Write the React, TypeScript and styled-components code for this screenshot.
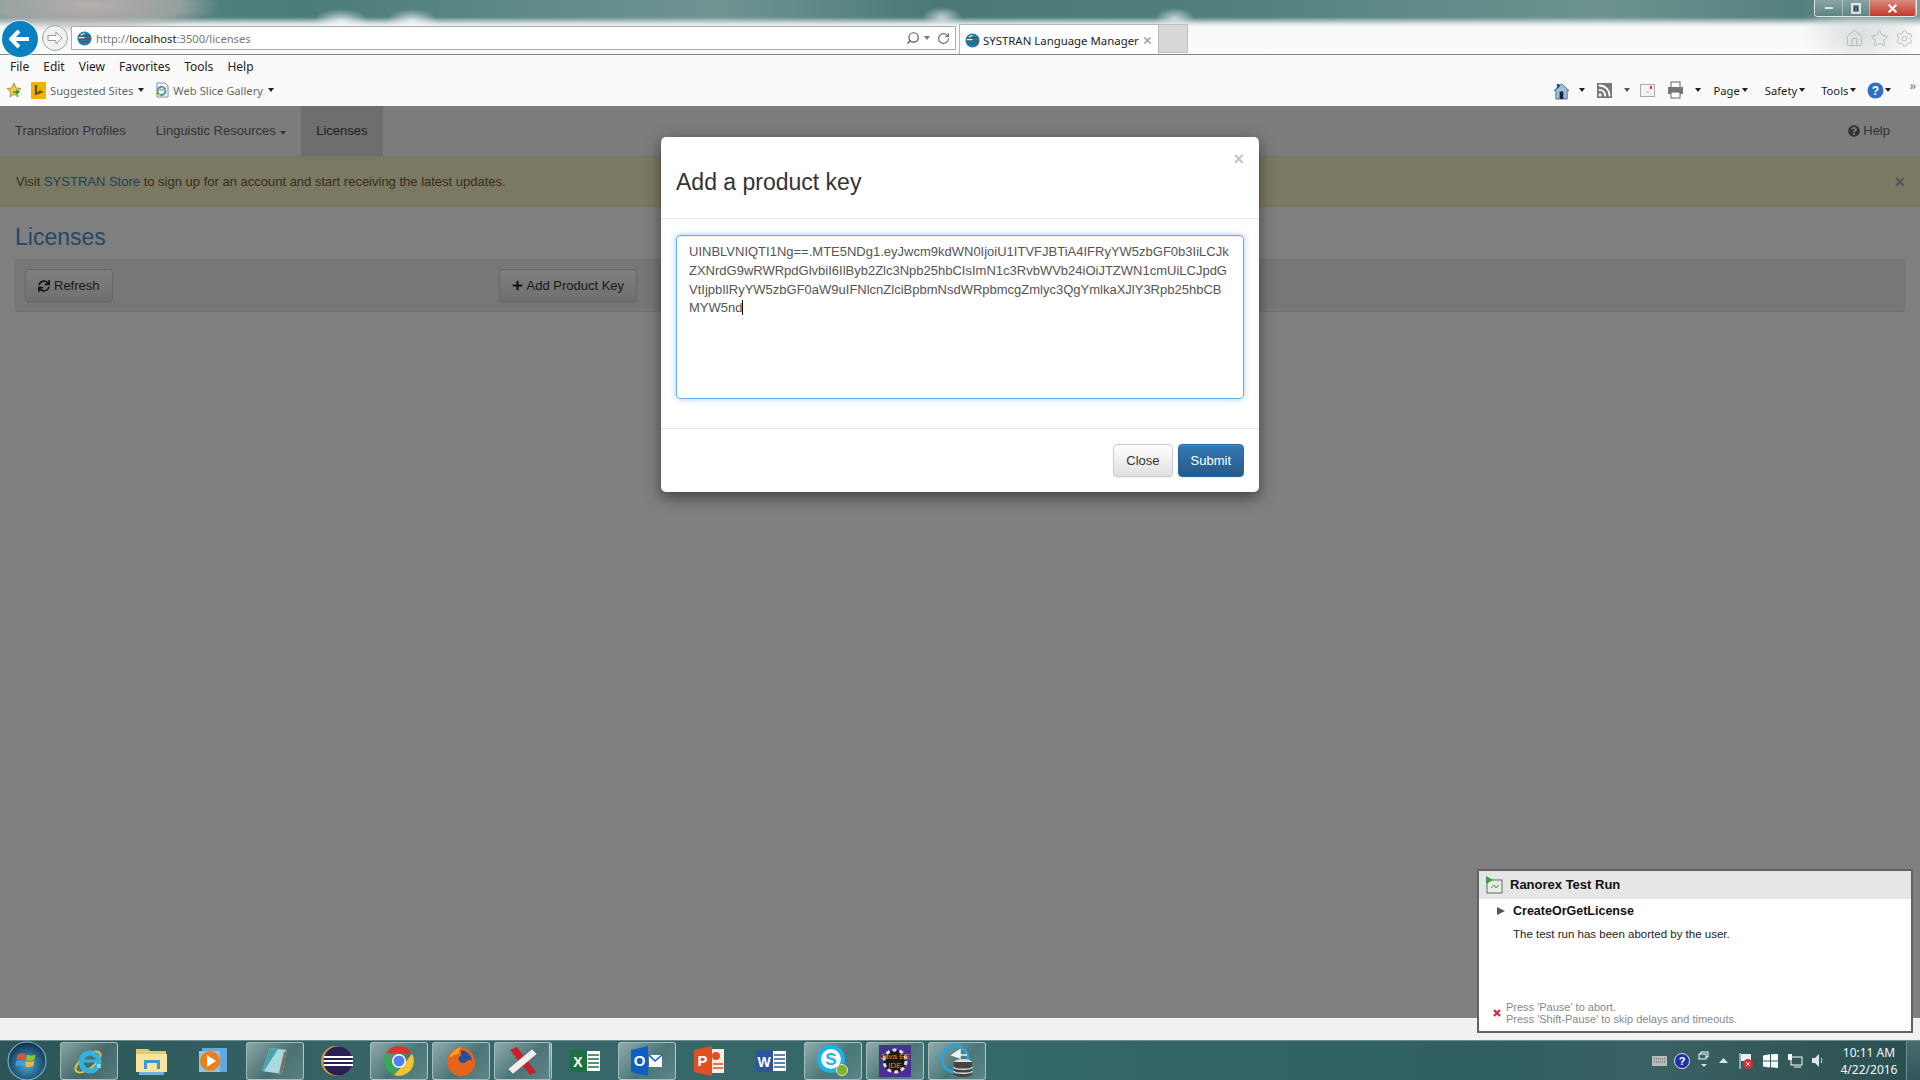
import React from "react";
import styled, { createGlobalStyle } from "styled-components";
import { FaSync, FaPlus, FaQuestionCircle } from "react-icons/fa";
import { Search, RotateCw, Home, Star, Settings, Minus, X, Rss } from "lucide-react";

const Global = createGlobalStyle`
  html, body { margin: 0; padding: 0; background: #808080; overflow: hidden; }
  * { box-sizing: border-box; }
`;
const UI = `"Noto Sans", "Liberation Sans", sans-serif`;
const WEB = `"Liberation Sans", Arial, sans-serif`;

const Screen = styled.div`
  width: 1920px; height: 1080px; display: flex; flex-direction: column; position: relative; overflow: hidden;
`;
const TopChrome = styled.header`
  height: 55px; flex: none; display: flex; flex-direction: column; border-bottom: 1px solid #7f8585;
  background:
    radial-gradient(ellipse 28px 12px at 341px 21px, rgba(255,255,255,.75), transparent),
    radial-gradient(ellipse 26px 12px at 412px 21px, rgba(255,255,255,.75), transparent),
    radial-gradient(ellipse 20px 10px at 942px 17px, rgba(255,255,255,.65), transparent),
    radial-gradient(ellipse 20px 10px at 1175px 18px, rgba(255,255,255,.65), transparent),
    radial-gradient(ellipse 130px 28px at 90px 6px, rgba(190,175,175,.95), rgba(190,180,180,.6) 70%, transparent),
    radial-gradient(ellipse 60px 36px at 1860px 34px, rgba(205,210,210,.7), transparent),
    linear-gradient(180deg, transparent 0, transparent 17px, #dfe6e6 24px, #f8f9f9 27px, #fbfbfb 100%),
    linear-gradient(90deg, #5d8b88 0, #4b7c7a 300px, #6f9593 720px, #497876 940px, #507f7d 1200px, #6c9390 1600px, #54807e 1800px, #7d9b9a 1920px);
`;
const TitleStrip = styled.div`
  height: 24px; display: flex; justify-content: flex-end; padding-right: 3px; flex: none;
`;
const WinControls = styled.div`
  display: flex; height: 17px; border: 1px solid #dfe6e6; border-top: 0; border-radius: 0 0 4px 4px; overflow: hidden;
`;
const WinBtn = styled.div<{ $w: number; $bg: string }>`
  width: ${p => p.$w}px; display: flex; align-items: center; justify-content: center; background: ${p => p.$bg};
  border-right: 1px solid rgba(255,255,255,.4); color: #fff;
`;
const AddressRow = styled.div`
  height: 30px; display: flex; align-items: flex-start; position: relative;
`;
const BackBtn = styled.div`
  width: 36px; height: 36px; border-radius: 50%; background: #0b80c0; margin: -3px 0 0 2px; display: flex; align-items: center; justify-content: center; position: relative; z-index: 1; flex: none;
  box-shadow: 0 0 0 1px rgba(255,255,255,.6);
`;
const FwdBtn = styled.div`
  width: 26px; height: 26px; border-radius: 50%; margin: 1px 3px 0 4px; display: flex; align-items: center; justify-content: center; flex: none;
  border: 1px solid #9fa5a5; background: #f0f1f1;
`;
const AddressBar = styled.div`
  width: 885px; height: 24px; margin-top: 2px; background: #fff; border: 1px solid #a8adad; display: flex; align-items: center; padding: 0 5px 0 5px; flex: none;
`;
const Url = styled.span`
  font: 11.2px ${UI}; color: #777; margin-left: 4px; flex: 1; white-space: nowrap;
  b { color: #222; font-weight: 400; }
`;
const Tab = styled.div`
  width: 200px; height: 30px; margin-left: 3px; background: #fff; border: 1px solid #b4b8b8; border-bottom: 0; display: flex; align-items: center; padding: 1px 0 0 5px; flex: none;
  font: 11.4px ${UI}; color: #222; white-space: nowrap; gap: 3px;
`;
const NewTab = styled.div`
  width: 29px; height: 29px; background: #d8d8d8; border: 1px solid #c0c0c0; border-left: 0; flex: none;
`;
const RightTools = styled.div`
  margin-left: auto; display: flex; gap: 6px; padding: 5px 6px 0 0; color: #a9aeae;
`;
const MenuArea = styled.div`
  height: 51px; flex: none; background: #fafafa; display: flex; flex-direction: column;
`;
const MenuRow = styled.nav`
  height: 22px; display: flex; align-items: center; padding-left: 10px; font: 12px ${UI}; color: #222; gap: 14px; flex: none;
`;
const FavRow = styled.div`
  height: 26px; display: flex; align-items: center; justify-content: space-between; font: 12px ${UI}; color: #555; padding: 0 4px 0 6px; flex: none;
`;
const FavGroup = styled.div`
  display: flex; align-items: center;
`;
const FavText = styled.span<{ $dark?: boolean; $ml?: number }>`
  margin-left: ${p => p.$ml ?? 4}px; color: ${p => (p.$dark ? "#222" : "#666")}; white-space: nowrap; font-size: 11.2px;
`;
const Caret = styled.i<{ $ml?: number; $c?: string }>`
  display: inline-block; width: 0; height: 0; border: 3.5px solid transparent; border-top: 4px solid ${p => p.$c ?? "#222"}; border-bottom: 0; margin-left: ${p => p.$ml ?? 5}px;
`;
const SideArrow = styled.i`
  display: inline-block; width: 0; height: 0; border-top: 4px solid transparent; border-bottom: 4px solid transparent; border-left: 8px solid #555;
`;
const IconSlot = styled.span<{ $ml?: number }>`
  display: inline-flex; margin-left: ${p => p.$ml ?? 0}px;
`;
const Chevrons = styled.span`
  font: 13px ${UI}; color: #778; margin: -10px 0 0 18px;
`;
const Page = styled.main`
  flex: 1; position: relative; background: #fff; font: 13px/18px ${WEB}; color: #333; display: flex; flex-direction: column;
`;
const Backdrop = styled.div`
  position: absolute; inset: 0; background: rgba(0,0,0,.5);
`;
const Navbar = styled.nav`
  height: 51px; background: #f8f8f8; display: flex; flex: none; border-bottom: 1px solid #e7e7e7;
`;
const NavLink = styled.a<{ $active?: boolean }>`
  padding: 0 15px; line-height: 50px; color: #666; background: ${p => (p.$active ? "#dcdcdc" : "transparent")};
  ${p => p.$active && "color:#444; padding: 0 15.500px;"}
`;
const NavHelp = styled.a`
  margin-left: auto; padding: 0 30px 0 0; line-height: 50px; color: #666; display: flex; align-items: center; gap: 3px;
`;
const Alert = styled.div`
  height: 50px; background: #f8f3c4; border-bottom: 1px solid #f3ebb6; padding: 0 15px 0 16px; line-height: 49px; color: #6a5c30; flex: none; display: flex; justify-content: space-between; align-items: center;
  a { color: #3a7fb8; }
`;
const AlertClose = styled.span`
  font: bold 18px/18px ${WEB}; color: #aaa; margin-right: 0;
`;
const PageTitle = styled.h1`
  font: 23px/30px ${WEB}; color: #4a8fd0; margin: 15px 15px 7px;
`;
const Toolbar = styled.div`
  margin: 0 15px; height: 53px; padding: 9px; background: #eee; border: 1px solid #e3e3e3; border-radius: 3px; display: flex; align-items: flex-start;
`;
const Btn = styled.button<{ $primary?: boolean; $ml?: number }>`
  height: 33px; padding: 0 12px; font: 13px ${WEB}; display: inline-flex; align-items: center; gap: 4px; justify-content: center;
  margin-left: ${p => p.$ml ?? 0}px;
  color: ${p => (p.$primary ? "#fff" : "#333")};
  border: 1px solid ${p => (p.$primary ? "#2b669a" : "#ccc")}; border-radius: 4px;
  background: ${p => (p.$primary ? "linear-gradient(#337ab7,#265a88)" : "linear-gradient(#fff,#e0e0e0)")};
  box-shadow: inset 0 1px 0 rgba(255,255,255,.15), 0 1px 1px rgba(0,0,0,.075);
`;
const Modal = styled.div`
  position: absolute; left: 661px; top: 31px; width: 598px; height: 355px; background: #fff; border-radius: 5px;
  box-shadow: 0 5px 15px rgba(0,0,0,.5); display: flex; flex-direction: column;
`;
const ModalHead = styled.div`
  height: 82px; padding: 0 15px; border-bottom: 1px solid #e5e5e5; position: relative; flex: none;
`;
const ModalTitle = styled.h4`
  margin: 32px 0 0; font: 500 23px/26px ${WEB}; color: #333;
`;
const ModalClose = styled.span`
  position: absolute; right: 15px; top: 13px; font: bold 18px/18px ${WEB}; color: #c4c4c4;
`;
const ModalBody = styled.div`
  height: 210px; padding: 16px 15px 0; border-bottom: 1px solid #e5e5e5; flex: none;
`;
const KeyArea = styled.div`
  height: 164px; border: 1px solid #66afe9; border-radius: 4px; padding: 7px 12px; font: 13px/18.8px ${WEB}; color: #555;
  box-shadow: inset 0 1px 1px rgba(0,0,0,.075), 0 0 6px rgba(102,175,233,.6); white-space: nowrap;
`;
const KeyLine = styled.div``;
const TextCaret = styled.span`
  display: inline-block; width: 1px; height: 15px; background: #111; vertical-align: -3px;
`;
const ModalFoot = styled.div`
  flex: 1; display: flex; justify-content: flex-end; gap: 5px; padding: 15px 15px 0;
`;
const Ranorex = styled.aside`
  position: absolute; left: 1477px; top: 869px; width: 436px; height: 164px; background: #fff; border: 2px solid #5f6366; display: flex; flex-direction: column;
  font: 11px ${WEB}; color: #222;
`;
const RanHead = styled.div`
  height: 28px; background: #e6e6e6; display: flex; align-items: center; padding: 0 0 1px 6px; gap: 7px; font: bold 13px ${WEB}; color: #111; flex: none;
`;
const RanTitle = styled.div`
  display: flex; align-items: center; padding: 5px 0 0 18px; gap: 8px; font: bold 12.5px ${WEB}; color: #111;
`;
const RanMsg = styled.div`
  padding: 10px 0 0 34px; font: 11.5px ${WEB}; color: #222;
`;
const RanFoot = styled.div`
  margin-top: auto; padding: 0 0 6px 14px; display: flex; align-items: center; gap: 5px; color: #888; font: 11px/12px ${WEB};
`;
const StatusBar = styled.div`
  height: 22px; flex: none; background: #f3f0f1; border-top: 1px solid #f9f9f9;
`;
const Taskbar = styled.footer`
  height: 40px; flex: none; display: flex; align-items: center; position: relative;
  background: linear-gradient(90deg, #2c5557 0, #376668 400px, #35686a 1000px, #2f5f61 1500px, #3a6163 1650px, #2a4f51 1920px);
  border-top: 1px solid #6f8d8e;
`;
const Orb = styled.div`
  width: 60px; height: 39px; display: flex; align-items: center; justify-content: center; flex: none; padding-right: 6px;
`;
const TaskBtn = styled.div<{ $framed?: boolean; $stack?: boolean; $ml?: number }>`
  width: 58px; height: 38px; margin-right: 4px; margin-left: ${p => p.$ml ?? 0}px; flex: none; border-radius: 3px; display: flex; align-items: center; justify-content: center; position: relative;
  ${p => p.$framed && `
    border: 1px solid rgba(215,228,228,.6);
    background: linear-gradient(135deg, rgba(255,255,255,.45), rgba(255,255,255,.1) 55%, rgba(255,255,255,.2));
  `}
  ${p => p.$stack && `border-right: 3px double rgba(215,228,228,.6);`}
`;
const Tray = styled.div`
  margin-left: auto; display: flex; align-items: center; height: 100%; color: #fff;
`;
const TrayIcon = styled.span<{ $w: number }>`
  width: ${p => p.$w}px; display: flex; align-items: center; justify-content: center; flex: none;
`;
const Clock = styled.div`
  width: 68px; text-align: center; font: 12px/17px ${UI}; color: #f4f8f8; margin-left: 6px; flex: none;
`;
const ShowDesktop = styled.div`
  width: 14px; height: 100%; margin-left: 3px; border-left: 1px solid #789; background: linear-gradient(#4a6e70,#2f5557); flex: none;
`;

const Globe = ({ s = 15 }: { s?: number }) => (
  <svg width={s} height={s} viewBox="0 0 16 16"><circle cx="8" cy="8" r="7.500" fill="#1d7fb4" /><path d="M2 5h12M1 8.500h14M3 11.500h11" stroke="#555" strokeWidth="1.600" /><path d="M4 4.500 8 2.500M2 7h6" stroke="#dff" strokeWidth="1.200" /></svg>
);
const IEIcon = () => (
  <svg width="32" height="30" viewBox="0 0 32 30">
    <ellipse cx="15" cy="16" rx="15" ry="6.500" fill="none" stroke="#f1c232" strokeWidth="2" transform="rotate(-38 15 16)" />
    <circle cx="17" cy="16" r="9" fill="none" stroke="#35b0e4" strokeWidth="5" />
    <path d="M10 15h15" stroke="#35b0e4" strokeWidth="3" /><path d="M24 20l4 0" stroke="#86d2f0" strokeWidth="4" />
  </svg>
);
const Folder = () => (
  <svg width="33" height="30" viewBox="0 0 33 30"><path d="M1 3h12l2 2h16v21H1z" fill="#e8c76a" /><rect x="1" y="8" width="31" height="18" fill="#f6e4a0" /><path d="M9 14h16v9H9z" fill="#3a9bd0" /><path d="M12 17h10v6H12z" fill="#f6e4a0" /><rect x="4" y="26" width="25" height="3" fill="#6db4dd" /></svg>
);
const Media = () => (
  <svg width="28" height="26" viewBox="0 0 28 26"><rect x="3" y="0" width="25" height="24" fill="#62a9dc" /><rect x="0" y="3" width="21" height="21" fill="#8dc4ea" /><circle cx="11" cy="13" r="10" fill="#ee7d1c" /><path d="M8 7l9 6-9 6z" fill="#fff" /></svg>
);
const Note = () => (
  <svg width="34" height="30" viewBox="0 0 34 30"><path d="M12 2l17 2-5 24-20-3z" fill="#a8dbe0" /><path d="M12 2l8 1-14 22H4z" fill="#4f9fae" /><path d="M26 6l3-2-5 24-3-1z" fill="#7e6f55" /></svg>
);
const Eclipse = () => (
  <svg width="32" height="32" viewBox="0 0 32 32"><circle cx="15" cy="16" r="15" fill="#c79a35" /><circle cx="17" cy="16" r="14.500" fill="#2b1d58" /><path d="M3 12h29M2.500 16h29.500M3 20h29" stroke="#fff" strokeWidth="2" /></svg>
);
const Chrome = () => (
  <svg width="30" height="30" viewBox="-15 -15 30 30">
    <path d="M0-15A15 15 0 0 1 13-7.500L0-7z" fill="#d9352c" /><path d="M-13-7.500A15 15 0 0 1 0-15L13-7.500H0z" fill="#d9352c" />
    <path d="M-13-7.500A15 15 0 0 0-5 14L0 6z" fill="#3aa757" /><path d="M13-7.500A15 15 0 0 1-5 14L6 2z" fill="#f3c430" />
    <circle r="7" fill="#fff" /><circle r="5.500" fill="#4e82ee" />
  </svg>
);
const Firefox = () => (
  <svg width="30" height="32" viewBox="0 0 30 32"><circle cx="15" cy="17" r="14" fill="#e8641b" /><path d="M15 5a12 12 0 0 1 11 11c-4-4-5 2-9 2-5 0-6-6-2-7z" fill="#24509a" /><path d="M3 13c3-7 8-10 13-11-3 3-4 5-3 7-4 0-7 2-10 4z" fill="#f4a227" /></svg>
);
const Cross = () => (
  <svg width="32" height="28" viewBox="0 0 32 28"><path d="M4 3l7-3 19 25-6 3z" fill="#c8202a" /><path d="M2 22L26 2l5 5L7 27z" fill="#f1efee" stroke="#666" strokeWidth=".6" /></svg>
);
const Sheet = ({ c, l, line = "#fff" }: { c: string; l: string; line?: string }) => (
  <svg width="30" height="24" viewBox="0 0 30 24">
    <rect x="0" y="1" width="17" height="22" fill={c} />
    <text x="8" y="17.500" fontFamily="Liberation Sans" fontWeight="700" fontSize="14" textAnchor="middle" fill="#fff">{l}</text>
    <rect x="17" y="2" width="13" height="20" fill={line} />
    <path d="M18 6h11M18 10h11M18 14h11M18 18h11" stroke={c} strokeWidth="1.400" />
  </svg>
);
const Outlook = () => (
  <svg width="32" height="30" viewBox="0 0 32 30"><path d="M0 4l17-4v30L0 26z" fill="#0a5fc4" /><text x="8.500" y="20" fontFamily="Liberation Sans" fontWeight="700" fontSize="15" textAnchor="middle" fill="#fff">O</text><rect x="18" y="9" width="13" height="12" fill="#fff" /><path d="M18 9l6 6 7-6" fill="none" stroke="#0a5fc4" strokeWidth="1.500" /></svg>
);
const Ppt = () => (
  <svg width="30" height="30" viewBox="0 0 30 30"><rect x="16" y="3" width="14" height="24" fill="#fdebe4" /><path d="M0 4l18-4v30L0 26z" fill="#e14f23" /><text x="8.500" y="20" fontFamily="Liberation Sans" fontWeight="700" fontSize="15" textAnchor="middle" fill="#fff">P</text><circle cx="22" cy="10" r="4" fill="#e14f23" /><path d="M19 18h10M19 22h10" stroke="#e14f23" strokeWidth="1.500" /></svg>
);
const Skype = () => (
  <svg width="32" height="32" viewBox="0 0 32 32"><circle cx="14" cy="14" r="12" fill="none" stroke="#1ab3ec" strokeWidth="4" /><circle cx="14" cy="14" r="10" fill="#fff" /><text x="14" y="20" fontFamily="Liberation Sans" fontWeight="700" fontSize="17" textAnchor="middle" fill="#1ab3ec">S</text><circle cx="25" cy="25" r="5.500" fill="#7db32a" stroke="#dfe8c8" /></svg>
);
const JavaEE = () => (
  <svg width="32" height="32" viewBox="0 0 32 32"><rect width="32" height="32" fill="#4a2f8e" /><circle cx="16" cy="16" r="11" fill="#181818" stroke="#ddd" strokeWidth="3" strokeDasharray="4 3" /><text x="16" y="14" fontFamily="Liberation Sans" fontSize="8" textAnchor="middle" fill="#e98a2b">Java EE</text><text x="16" y="23" fontFamily="Liberation Sans" fontSize="8" textAnchor="middle" fill="#e98a2b">IDE</text></svg>
);
const IEDb = () => (
  <svg width="34" height="34" viewBox="0 0 34 34"><circle cx="15" cy="15" r="13" fill="none" stroke="#2aa2dd" strokeWidth="3" /><path d="M20 6l-8 5 8 3zM12 11h15" fill="#eaf4fa" stroke="#eaf4fa" strokeWidth="1.500" /><ellipse cx="23" cy="18" rx="9" ry="3" fill="#ddd" /><path d="M14 18v12c0 4 18 4 18 0V18" fill="#444" /><path d="M14 23c0 3 18 3 18 0M14 27c0 3 18 3 18 0" fill="none" stroke="#ddd" strokeWidth="1.500" /></svg>
);
const WinOrb = () => (
  <svg width="40" height="40" viewBox="0 0 38 38">
    <defs><radialGradient id="orb" cx=".5" cy=".6" r=".6"><stop offset="0" stopColor="#4aa8d8" /><stop offset="1" stopColor="#0d2f47" /></radialGradient></defs>
    <circle cx="19" cy="19" r="18" fill="url(#orb)" stroke="#7fb7d4" />
    <path d="M10 13c3-2 6-1 8 0l-1 5c-3-1-5-1-8 0z" fill="#e2533a" /><path d="M19 13c3 1 5 1 8 0l-1 5c-3 1-5 1-8 0z" fill="#8cc63f" />
    <path d="M9 19c3-1 5-1 8 0l-1 5c-3-1-5-1-8 0z" fill="#3e9fe0" /><path d="M18 19c3 1 5 1 8 0l-1 5c-3 1-6 1-8 0z" fill="#f7b52c" />
  </svg>
);
const RanorexIcon = () => (
  <svg width="18" height="18" viewBox="0 0 18 18"><rect x="2" y="4" width="15" height="13" fill="#e6eee2" stroke="#667" /><path d="M1 0l7 4-7 4z" fill="#3aa33a" /><path d="M6 12l3-3 2 3 3-3" stroke="#3a9a3a" fill="none" /></svg>
);

const KEY = [
  "UINBLVNIQTI1Ng==.MTE5NDg1.eyJwcm9kdWN0IjoiU1ITVFJBTiA4IFRyYW5zbGF0b3IiLCJk",
  "ZXNrdG9wRWRpdGlvbiI6IlByb2Zlc3Npb25hbCIsImN1c3RvbWVb24iOiJTZWN1cmUiLCJpdG",
  "VtIjpbIlRyYW5zbGF0aW9uIFNlcnZlciBpbmNsdWRpbmcgZmlyc3QgYmlkaXJlY3Rpb25hbCB",
];

export default function App() {
  return (
    <Screen>
      <Global />
      <TopChrome>
        <TitleStrip>
          <WinControls>
            <WinBtn $w={28} $bg="linear-gradient(#8aa5a5,#5f8483)"><Minus size={12} strokeWidth={3} /></WinBtn>
            <WinBtn $w={27} $bg="linear-gradient(#8aa5a5,#5f8483)"><svg width="10" height="11" viewBox="0 0 10 11"><rect x="1" y="1" width="8" height="9" fill="none" stroke="#fff" strokeWidth="1.500" /><rect x="3.500" y="4" width="3" height="3" fill="none" stroke="#334" /></svg></WinBtn>
            <WinBtn $w={46} $bg="linear-gradient(#d98a7c,#c5392a)"><X size={13} strokeWidth={4} /></WinBtn>
          </WinControls>
        </TitleStrip>
        <AddressRow>
          <BackBtn><svg width="22" height="20" viewBox="0 0 22 20"><path d="M10 2 2 10l8 8M3 10h17" fill="none" stroke="#fff" strokeWidth="4" /></svg></BackBtn>
          <FwdBtn><svg width="16" height="14" viewBox="0 0 16 14"><path d="M9 1l6 6-6 6V9.500H1v-5h8z" fill="#fff" stroke="#999" /></svg></FwdBtn>
          <AddressBar>
            <Globe />
            <Url>http://<b>localhost</b>:3500/licenses</Url>
            <Search size={14} color="#555" style={{ transform: "scaleX(-1)" }} />
            <Caret $ml={4} $c="#777" />
            <IconSlot $ml={7}><RotateCw size={13} color="#666" /></IconSlot>
          </AddressBar>
          <Tab><Globe />SYSTRAN Language Manager<X size={11} color="#999" strokeWidth={3} /></Tab>
          <NewTab />
          <RightTools>
            <Home size={19} strokeWidth={1} />
            <Star size={19} strokeWidth={1} />
            <Settings size={19} strokeWidth={1} />
          </RightTools>
        </AddressRow>
      </TopChrome>
      <MenuArea>
        <MenuRow>
          <span>File</span><span>Edit</span><span>View</span><span>Favorites</span><span>Tools</span><span>Help</span>
        </MenuRow>
        <FavRow>
          <FavGroup>
            <svg width="16" height="16" viewBox="0 0 16 16"><path d="M8 1l2 5 5 .5-4 3.500 1 5-4-3-4 3 1-5-4-3.500L6 6z" fill="#e8d35a" stroke="#a8962e" /><path d="M7 10h6M10 8l3 2-3 2" stroke="#3a9a3a" strokeWidth="1.500" fill="none" /></svg>
            <IconSlot $ml={9}><svg width="15" height="17" viewBox="0 0 15 17"><rect width="15" height="17" fill="#f0b400" /><path d="M5 3v9l5-2-2-1" fill="none" stroke="#6b4a00" strokeWidth="2.200" /></svg></IconSlot>
            <FavText>Suggested Sites</FavText><Caret />
            <IconSlot $ml={11}><svg width="14" height="16" viewBox="0 0 14 16"><path d="M2 1h8l3 3v11H2z" fill="#fff" stroke="#889" /><circle cx="6.500" cy="9" r="4" fill="none" stroke="#2a8fd0" strokeWidth="1.800" /><path d="M3 8h7" stroke="#2a8fd0" /><ellipse cx="6" cy="9" rx="6" ry="2.500" fill="none" stroke="#e8c030" strokeWidth=".8" transform="rotate(-35 6 9)" /></svg></IconSlot>
            <FavText>Web Slice Gallery</FavText><Caret />
          </FavGroup>
          <FavGroup>
            <svg width="15" height="19" viewBox="0 0 16 20"><path d="M8 3 0 10h2v9h12v-9h2z" fill="#9cc0dc" stroke="#3f6f96" /><path d="M3 3h3v3l-3 3z" fill="#2c4f7a" /><rect x="6" y="11" width="4" height="8" fill="#223" /></svg>
            <Caret $ml={10} />
            <IconSlot $ml={12}><Rss size={15} color="#fff" style={{ background: "#777" }} strokeWidth={3} /></IconSlot>
            <Caret $ml={12} $c="#555" />
            <IconSlot $ml={10}><svg width="15" height="13" viewBox="0 0 15 13"><rect x=".5" y=".5" width="14" height="12" fill="#f4f4f4" stroke="#aaa" /><rect x="10" y="2" width="2" height="3" fill="#e25" /><path d="M6 8h3" stroke="#aaa" /></svg></IconSlot>
            <IconSlot $ml={12}><svg width="17" height="18" viewBox="0 0 17 18"><rect x="4" y="1" width="9" height="6" fill="#fff" stroke="#666" /><rect x="1" y="6" width="15" height="7" fill="#777" /><rect x="4" y="11" width="9" height="6" fill="#fff" stroke="#666" /></svg></IconSlot>
            <Caret $ml={11} />
            <FavText $dark $ml={13}>Page</FavText><Caret $ml={2} />
            <FavText $dark $ml={17}>Safety</FavText><Caret $ml={2} />
            <FavText $dark $ml={16}>Tools</FavText><Caret $ml={2} />
            <IconSlot $ml={11}><svg width="17" height="17" viewBox="0 0 17 17"><circle cx="8.500" cy="8.500" r="8" fill="#2f6fc0" /><text x="8.500" y="13" fontFamily="Liberation Sans" fontWeight="700" fontSize="12" textAnchor="middle" fill="#fff">?</text></svg></IconSlot>
            <Caret $ml={1} />
            <Chevrons>»</Chevrons>
          </FavGroup>
        </FavRow>
      </MenuArea>
      <Page>
        <Navbar>
          <NavLink>Translation Profiles</NavLink>
          <NavLink>Linguistic Resources<Caret $ml={4} $c="#666" /></NavLink>
          <NavLink $active>Licenses</NavLink>
          <NavHelp><FaQuestionCircle size={12} />Help</NavHelp>
        </Navbar>
        <Alert>
          <span>Visit <a>SYSTRAN Store</a> to sign up for an account and start receiving the latest updates.</span>
          <AlertClose>×</AlertClose>
        </Alert>
        <PageTitle>Licenses</PageTitle>
        <Toolbar>
          <Btn><FaSync size={12} color="#222" />Refresh</Btn>
          <Btn $ml={386}><FaPlus size={11} color="#222" />Add Product Key</Btn>
        </Toolbar>
        <Backdrop />
        <Modal>
          <ModalHead>
            <ModalClose>×</ModalClose>
            <ModalTitle>Add a product key</ModalTitle>
          </ModalHead>
          <ModalBody>
            <KeyArea>
              {KEY.map(k => <KeyLine key={k}>{k}</KeyLine>)}
              <KeyLine>MYW5nd<TextCaret /></KeyLine>
            </KeyArea>
          </ModalBody>
          <ModalFoot>
            <Btn>Close</Btn>
            <Btn $primary>Submit</Btn>
          </ModalFoot>
        </Modal>
      </Page>
      <StatusBar />
      <Taskbar>
        <Orb><WinOrb /></Orb>
        <TaskBtn $framed><IEIcon /></TaskBtn>
        <TaskBtn><Folder /></TaskBtn>
        <TaskBtn><Media /></TaskBtn>
        <TaskBtn $framed><Note /></TaskBtn>
        <TaskBtn><Eclipse /></TaskBtn>
        <TaskBtn $framed><Chrome /></TaskBtn>
        <TaskBtn $framed><Firefox /></TaskBtn>
        <TaskBtn $framed $stack><Cross /></TaskBtn>
        <TaskBtn><Sheet c="#1d7044" l="X" /></TaskBtn>
        <TaskBtn $framed><Outlook /></TaskBtn>
        <TaskBtn><Ppt /></TaskBtn>
        <TaskBtn><Sheet c="#2b579a" l="W" /></TaskBtn>
        <TaskBtn $framed><Skype /></TaskBtn>
        <TaskBtn $framed><JavaEE /></TaskBtn>
        <TaskBtn $framed><IEDb /></TaskBtn>
        <Tray>
          <TrayIcon $w={23}><svg width="15" height="10" viewBox="0 0 15 10"><rect width="15" height="10" fill="#b5bcbc" /><path d="M2 3h11M2 6h11" stroke="#556" strokeDasharray="1 1" /></svg></TrayIcon>
          <TrayIcon $w={22}><svg width="16" height="16" viewBox="0 0 16 16"><circle cx="8" cy="8" r="7.500" fill="#1e2fa8" stroke="#dde" /><text x="8" y="12" fontFamily="Liberation Sans" fontWeight="700" fontSize="11" textAnchor="middle" fill="#fff">?</text></svg></TrayIcon>
          <TrayIcon $w={21}><svg width="12" height="20" viewBox="0 0 12 20"><rect x="3" y="1" width="7" height="5" fill="none" stroke="#fff" /><rect x="1" y="3" width="7" height="5" fill="#35686a" stroke="#fff" /><path d="M3 13h6l-3 3z" fill="#dde" /></svg></TrayIcon>
          <TrayIcon $w={19}><svg width="9" height="5" viewBox="0 0 9 5"><path d="M0 5l4.500-5L9 5z" fill="#dfe8e8" /></svg></TrayIcon>
          <TrayIcon $w={26}><svg width="14" height="18" viewBox="0 0 14 18"><path d="M1 1v16" stroke="#fff" /><path d="M2 2h10v7H2z" fill="#eee" /><circle cx="9" cy="12" r="5" fill="#d83030" /><path d="M7 10l4 4m0-4l-4 4" stroke="#fff" /></svg></TrayIcon>
          <TrayIcon $w={23}><svg width="15" height="14" viewBox="0 0 15 14"><path d="M0 1.500l7-1.200V6.500H0zM8 .2 15 0v6.500H8zM0 7.500h7v6L0 12.500zM8 7.500h7V14l-7-.8z" fill="#fff" /></svg></TrayIcon>
          <TrayIcon $w={25}><svg width="16" height="16" viewBox="0 0 16 16"><rect x="4" y="4" width="11" height="8" fill="none" stroke="#fff" /><rect x="1" y="1" width="4" height="6" fill="#fff" /><path d="M7 14h7" stroke="#fff" /></svg></TrayIcon>
          <TrayIcon $w={22}><svg width="12" height="13" viewBox="0 0 12 13"><path d="M0 4h3l4-4v13L3 9H0z" fill="#dfe8e8" /><path d="M9 4c1 1.500 1 3.500 0 5" stroke="#dfe8e8" fill="none" /></svg></TrayIcon>
          <Clock>10:11 AM<br />4/22/2016</Clock>
          <ShowDesktop />
        </Tray>
      </Taskbar>
      <Ranorex>
        <RanHead><RanorexIcon />Ranorex Test Run</RanHead>
        <RanTitle><SideArrow />CreateOrGetLicense</RanTitle>
        <RanMsg>The test run has been aborted by the user.</RanMsg>
        <RanFoot>
          <svg width="8" height="8" viewBox="0 0 8 8"><path d="M1 1l6 6m0-6L1 7" stroke="#d03040" strokeWidth="2.400" /></svg>
          <div>Press 'Pause' to abort.<br />Press 'Shift-Pause' to skip delays and timeouts.</div>
        </RanFoot>
      </Ranorex>
    </Screen>
  );
}
